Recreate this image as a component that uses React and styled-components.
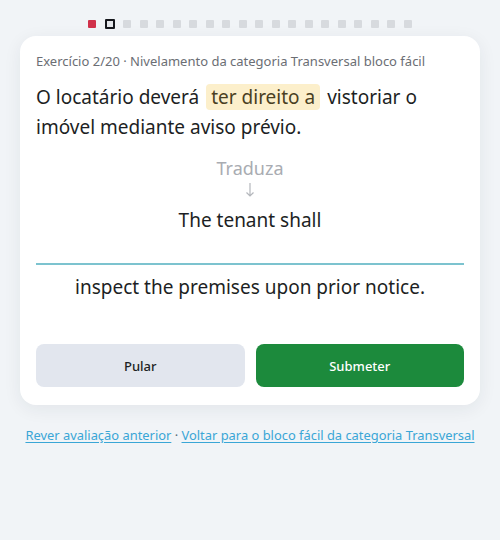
import styled, { createGlobalStyle } from 'styled-components';

const GlobalStyle = createGlobalStyle`
  body {
    margin: 0;
    background: #f1f4f7;
    font-family: "Noto Sans", "Open Sans", sans-serif;
  }
`;

const Page = styled.div`
  width: 500px;
  min-height: 540px;
  padding: 19px 20px 0;
  box-sizing: border-box;
`;

const Dots = styled.div`
  display: flex;
  justify-content: center;
  align-items: center;
  gap: 8.5px;
  height: 10px;
`;

const Dot = styled.span`
  box-sizing: border-box;
  width: ${p => (p.$current ? 10 : 8)}px;
  height: ${p => (p.$current ? 10 : 8)}px;
  background: ${p => (p.$done ? '#d0314a' : p.$current ? '#e4e6ea' : '#d7dade')};
  border: ${p => (p.$current ? '2px solid #15171c' : 'none')};
  border-radius: 1px;
`;

const Card = styled.div`
  margin-top: 7px;
  background: #fff;
  border-radius: 16px;
  box-shadow: 0 4px 18px rgba(30, 40, 60, 0.07);
  padding: 17px 16px 18px;
`;

const Meta = styled.div`
  font-size: 13px;
  color: #6b6e74;
  line-height: 16px;
`;

const Sentence = styled.p`
  margin: 13px 0 0;
  font-size: 19px;
  line-height: 30px;
  color: #1d1f24;
`;

const Mark = styled.span`
  background: #fcefcb;
  color: #4a3f22;
  border-radius: 4px;
  padding: 0 5px;
  margin: 0 7px;
`;

const Prompt = styled.div`
  margin-top: 15px;
  display: flex;
  flex-direction: column;
  align-items: center;
  gap: 3px;
  color: #a9acb2;
  font-size: 18px;
  line-height: 22px;
`;

const Arrow = styled.svg`
  display: block;
  width: 10px;
  height: 15px;
`;

const Source = styled.div`
  margin-top: 11px;
  text-align: center;
  font-size: 19px;
  line-height: 24px;
  color: #1d1f24;
`;

const Answer = styled.input`
  display: block;
  width: 100%;
  box-sizing: border-box;
  margin-top: 9px;
  height: 24px;
  padding: 0;
  border: none;
  border-bottom: 2px solid #7cc3cf;
  outline: none;
  background: transparent;
  font: inherit;
`;

const Tail = styled.div`
  margin-top: 9px;
  text-align: center;
  font-size: 19px;
  line-height: 26px;
  color: #1d1f24;
`;

const Actions = styled.div`
  margin-top: 44px;
  display: grid;
  grid-template-columns: 1fr 1fr;
  gap: 11px;
`;

const Button = styled.button`
  height: 43px;
  border: none;
  border-radius: 8px;
  font-family: inherit;
  font-size: 13px;
  background: ${p => (p.$primary ? '#1c8a3c' : '#e2e6ee')};
  color: ${p => (p.$primary ? '#fff' : '#1d1f24')};
  font-weight: 500;
`;

const Links = styled.div`
  margin-top: 21px;
  text-align: center;
  font-size: 12.9px;
  color: #5b6b7a;
`;

const Link = styled.a`
  color: #3aa6d6;
  text-decoration: underline;
  text-underline-offset: 2px;
`;

export default function App() {
  return (
    <>
      <GlobalStyle />
      <Page>
        <Dots>
          {Array.from({ length: 20 }, (_, i) => (
            <Dot key={i} $done={i === 0} $current={i === 1} />
          ))}
        </Dots>
        <Card>
          <Meta>Exercício 2/20 · Nivelamento da categoria Transversal bloco fácil</Meta>
          <Sentence>
            {'O locatário deverá'}
            <Mark>ter direito a</Mark>
            {'vistoriar o '}
            {'imóvel mediante aviso prévio.'}
          </Sentence>
          <Prompt>
            Traduza
            <Arrow viewBox="0 0 10 15" fill="none" stroke="#b4b7bc" strokeWidth="1.2">
              <path d="M5 1v13M1.5 10.5L5 14l3.5-3.5" />
            </Arrow>
          </Prompt>
          <Source>The tenant shall</Source>
          <Answer type="text" />
          <Tail>inspect the premises upon prior notice.</Tail>
          <Actions>
            <Button>Pular</Button>
            <Button $primary>Submeter</Button>
          </Actions>
        </Card>
        <Links>
          <Link href="#">Rever avaliação anterior</Link> · <Link href="#">Voltar para o bloco fácil da categoria Transversal</Link>
        </Links>
      </Page>
    </>
  );
}
